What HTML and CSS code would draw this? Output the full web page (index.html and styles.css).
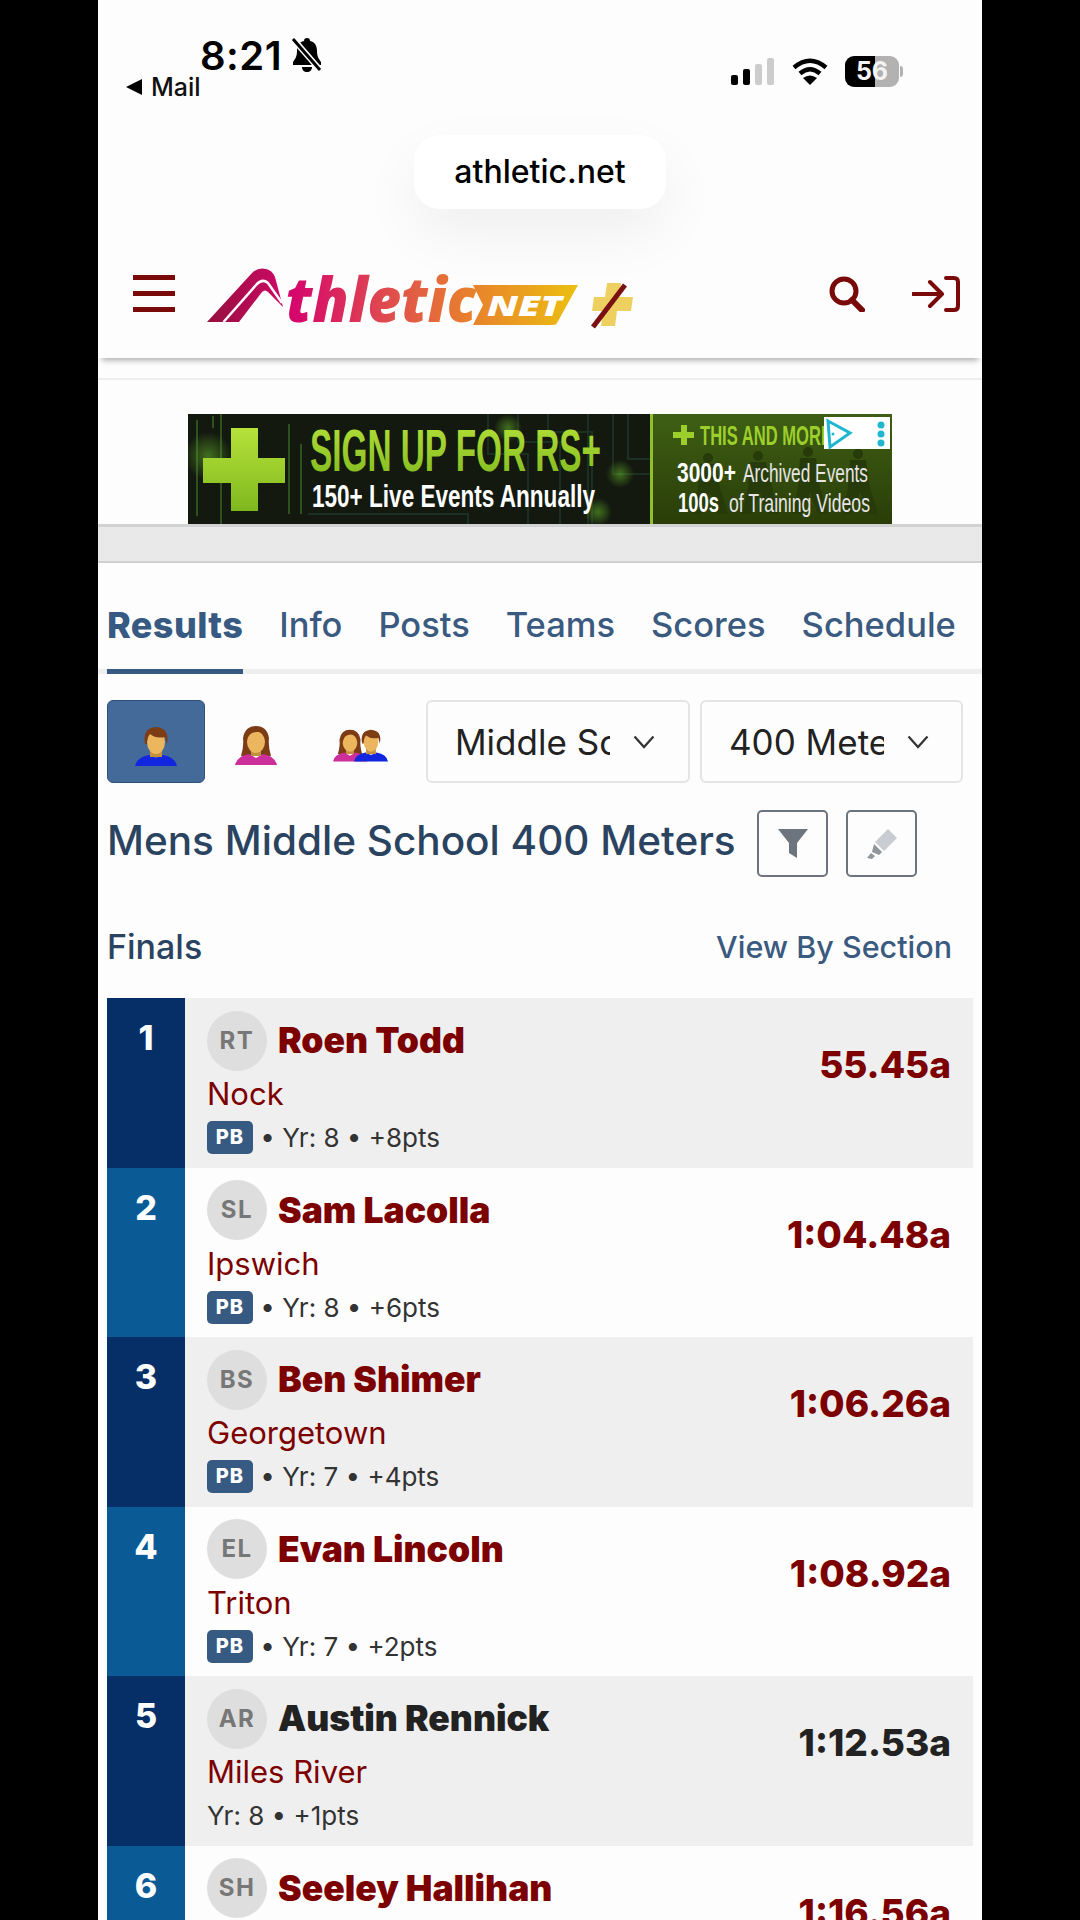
FILE: index.html
```html
<!DOCTYPE html>
<html lang="en">
<head>
  <meta charset="UTF-8">
  <title>Athletic.net Results</title>
  <link rel="stylesheet" href="styles.css">
</head>
<body>
  <svg class="defs" width="0" height="0">
    <defs>
      <linearGradient id="logoGrad" gradientUnits="userSpaceOnUse" x1="0" y1="0" x2="372" y2="0">
        <stop offset="0" stop-color="#94103c"/>
        <stop offset="0.24" stop-color="#d6076c"/>
        <stop offset="0.5" stop-color="#e04f4c"/>
        <stop offset="0.72" stop-color="#e8832c"/>
        <stop offset="1" stop-color="#ecc010"/>
      </linearGradient>
      <linearGradient id="adGreen" x1="0" y1="0" x2="0" y2="1">
        <stop offset="0" stop-color="#b6e23a"/>
        <stop offset="1" stop-color="#7fb81e"/>
      </linearGradient>
      <radialGradient id="adGlow">
        <stop offset="0" stop-color="#5fa82a" stop-opacity="0.6"/>
        <stop offset="1" stop-color="#5fa82a" stop-opacity="0"/>
      </radialGradient>
      <linearGradient id="adRight" x1="0" y1="0" x2="0" y2="1">
        <stop offset="0" stop-color="#3f5f14"/>
        <stop offset="1" stop-color="#2a3d08"/>
      </linearGradient>
      <symbol id="man" viewBox="0 0 42 40">
        <path d="M0 39Q2 30 14 28L21 31 28 28Q40 30 42 39Z" fill="#1226e0"/>
        <rect x="15" y="21" width="12" height="9" fill="#c58f42"/>
        <ellipse cx="21" cy="15" rx="9" ry="12" fill="#ecb65e"/>
        <path d="M10 17Q7 1 21 0 35 1 32 17L30 10Q21 12 15 7 12 10 12 17Z" fill="#7c3c14"/>
      </symbol>
      <symbol id="woman" viewBox="0 0 42 40">
        <path d="M6 30Q9 20 8 12 10 0 21 0 32 0 34 12 33 20 36 30Z" fill="#7c3c14"/>
        <path d="M0 39Q2 30 14 28L21 32 28 28Q40 30 42 39Z" fill="#cc2f9a"/>
        <rect x="16" y="22" width="10" height="8" fill="#c58f42"/>
        <ellipse cx="21" cy="16" rx="9" ry="11" fill="#ecb65e"/>
        <path d="M12 14Q14 5 24 6 29 8 30 14 30 5 21 4 12 5 12 14Z" fill="#7c3c14"/>
      </symbol>
    </defs>
  </svg>

  <div class="screen">
    <div class="status">
      <div class="status-left">
        <div class="time-row">
          <span class="time">8:21</span>
          <svg class="bell" viewBox="0 0 32 36">
            <path d="M16 1c2 0 3 1 3 3 5 1 7 5 7 10 0 6 2 8 4 11v3H2v-3c2-3 4-5 4-11 0-5 2-9 7-10 0-2 1-3 3-3z" fill="#000"/>
            <path d="M11 30h10c0 3-2 5-5 5s-5-2-5-5z" fill="#000"/>
            <path d="M3 3l27 31" stroke="#fff" stroke-width="6"/>
            <path d="M2 2l27 31" stroke="#000" stroke-width="3"/>
          </svg>
        </div>
        <div class="back"><span class="back-arrow"></span>Mail</div>
      </div>
      <div class="status-right">
        <svg class="signal" viewBox="0 0 44 27">
          <rect x="0" y="17" width="7" height="10" rx="2" fill="#000"/>
          <rect x="12" y="11" width="7" height="16" rx="2" fill="#000"/>
          <rect x="24" y="6" width="7" height="21" rx="2" fill="#ccc"/>
          <rect x="36" y="0" width="7" height="27" rx="2" fill="#ccc"/>
        </svg>
        <svg class="wifi" viewBox="0 0 36 27">
          <path d="M2 9.500Q18-4 34 9.500" fill="none" stroke="#000" stroke-width="4.500"/>
          <path d="M8 15.500Q18 7 28 15.500" fill="none" stroke="#000" stroke-width="4.500"/>
          <path d="M18 27l-7-7q7-5 14 0z" fill="#000"/>
        </svg>
        <div class="battery">
          <div class="battery-body">56</div>
          <span class="battery-nub"></span>
        </div>
      </div>
    </div>

    <div class="url-row">
      <div class="url-pill">athletic.net</div>
    </div>

    <header class="site-header">
      <div class="burger"><span></span><span></span><span></span></div>
      <svg class="logo" viewBox="0 0 430 65">
        <path d="M1 57L46 8Q52 2 60 4 66 5 69 12L77 42 62 27Q59 24 56 27L33 57Z" fill="url(#logoGrad)"/>
        <path d="M17.500 57L50 20Q56 13 62 18L76 38" fill="none" stroke="#fdfdfd" stroke-width="2.500"/>
        <text class="logo-word" x="80" y="57" textLength="190" lengthAdjust="spacingAndGlyphs" fill="url(#logoGrad)">thletic</text>
        <path d="M267 20H372L351 58Q350 60 347 60H267L277 40Z" fill="url(#logoGrad)"/>
        <text class="logo-net" x="281" y="51" textLength="75" lengthAdjust="spacingAndGlyphs" fill="#fff">NET</text>
        <path d="M401 18H415L413 32H427L425 46H411L409 61H395L397 46H386L388 32H399Z" fill="#eed060"/>
        <path d="M387 62L419 20" stroke="#7a1010" stroke-width="5"/>
      </svg>
      <div class="header-icons">
        <svg class="search" viewBox="0 0 36 36">
          <circle cx="15" cy="15" r="12" fill="none" stroke="#7a0a0a" stroke-width="5"/>
          <path d="M23 24l10 10" stroke="#7a0a0a" stroke-width="6" stroke-linecap="round"/>
        </svg>
        <svg class="signin" viewBox="0 0 48 36">
          <path d="M1 18H29M18 6l12 12-12 12" fill="none" stroke="#7a0a0a" stroke-width="4" stroke-linecap="round" stroke-linejoin="round"/>
          <path d="M34 2h8q4 0 4 4v24q0 4-4 4h-8" fill="none" stroke="#7a0a0a" stroke-width="4" stroke-linecap="round"/>
        </svg>
      </div>
    </header>

    <div class="ad-wrap">
      <svg class="ad" viewBox="0 0 704 110">
        <rect width="463" height="110" fill="#14190f"/>
        <g fill="none" stroke="#1b2f22" stroke-width="2">
          <path d="M300 0V40H340V110M330 0V28H372V110M360 0V18H404V110"/>
          <path d="M400 0V110M425 0V60H463M440 0V45H463M120 100H280V110"/>
        </g>
        <g fill="#2d5220">
          <rect x="8" y="6" width="2" height="96"/>
          <rect x="24" y="2" width="2" height="12"/>
          <rect x="32" y="0" width="2" height="110"/>
          <rect x="100" y="10" width="2" height="90"/>
          <rect x="112" y="30" width="2" height="70"/>
        </g>
        <circle cx="20" cy="42" r="24" fill="url(#adGlow)"/>
        <circle cx="320" cy="14" r="14" fill="url(#adGlow)"/>
        <circle cx="432" cy="60" r="14" fill="url(#adGlow)"/>
        <circle cx="410" cy="98" r="14" fill="url(#adGlow)"/>
        <path d="M43 14H70V44H97V69H70V97H43V69H15V44H43Z" fill="url(#adGreen)"/>
        <text class="ad-head" x="122" y="57" textLength="291" lengthAdjust="spacingAndGlyphs" fill="url(#adGreen)">SIGN UP FOR RS+</text>
        <text class="ad-sub" x="124" y="93" textLength="283" lengthAdjust="spacingAndGlyphs">150+ Live Events Annually</text>

        <rect x="463" width="241" height="110" fill="url(#adRight)"/>
        <rect x="462" width="3" height="110" fill="#8fc12c"/>
        <g fill="#263a0a">
          <circle cx="520" cy="44" r="5"/><path d="M512 50h16l4 24 8 26h-10l-8-22-8 22h-10l6-26z"/>
          <circle cx="570" cy="42" r="5"/><path d="M562 48h16l6 26 6 26h-10l-8-22-8 22h-10l6-26z"/>
          <circle cx="620" cy="38" r="5"/><path d="M612 44h16l4 30 8 26h-10l-8-22-8 22h-10l6-26z"/>
          <circle cx="670" cy="40" r="5"/><path d="M662 46h16l4 28 8 26h-10l-8-22-8 22h-10l6-26z"/>
        </g>
        <path d="M493 11H499V18H506V24H499V31H493V24H485V18H493Z" fill="#9ccf2c"/>
        <text class="ad-more" x="512" y="31" textLength="132" lengthAdjust="spacingAndGlyphs" fill="#9ccf2c">THIS AND MORE</text>
        <text class="ad-num" x="489" y="68" textLength="59" lengthAdjust="spacingAndGlyphs">3000+</text>
        <text class="ad-small" x="555" y="68" textLength="125" lengthAdjust="spacingAndGlyphs">Archived Events</text>
        <text class="ad-num" x="490" y="98" textLength="41" lengthAdjust="spacingAndGlyphs">100s</text>
        <text class="ad-small" x="541" y="98" textLength="141" lengthAdjust="spacingAndGlyphs">of Training Videos</text>

        <rect x="636" y="3" width="66" height="32" fill="#fff"/>
        <path d="M640 7L662 19 642 33Z" fill="none" stroke="#1fb6d0" stroke-width="3"/>
        <circle cx="645" cy="20" r="1.500" fill="#1fb6d0"/>
        <g fill="#1fb6d0">
          <circle cx="693" cy="11" r="3.500"/><circle cx="693" cy="20" r="3.500"/><circle cx="693" cy="29" r="3.500"/>
        </g>
      </svg>
    </div>
    <div class="ad-band"></div>

    <nav class="tabs">
      <a class="tab tab-active">Results</a>
      <a class="tab">Info</a>
      <a class="tab">Posts</a>
      <a class="tab">Teams</a>
      <a class="tab">Scores</a>
      <a class="tab">Schedule</a>
    </nav>

    <div class="controls">
      <div class="gender gender-active"><svg class="person"><use href="#man"/></svg></div>
      <div class="gender"><svg class="person"><use href="#woman"/></svg></div>
      <div class="gender gender-last"><svg class="person-pair" viewBox="0 0 55 40"><use href="#woman" width="34" height="40"/><use href="#man" x="21" width="34" height="40"/></svg></div>
      <div class="select">
        <span class="select-text">Middle School</span>
        <svg class="chevron" viewBox="0 0 22 14"><path d="M1.500 1.500L11 12 20.500 1.500" fill="none" stroke="#333" stroke-width="2.200"/></svg>
      </div>
      <div class="select">
        <span class="select-text">400 Meters</span>
        <svg class="chevron" viewBox="0 0 22 14"><path d="M1.500 1.500L11 12 20.500 1.500" fill="none" stroke="#333" stroke-width="2.200"/></svg>
      </div>
    </div>

    <div class="title-row">
      <h1 class="title">Mens Middle School 400 Meters</h1>
      <div class="tool-btn">
        <svg class="tool-icon" viewBox="0 0 32 32"><path d="M1 1H31L20 15V30L12 25V15Z" fill="#6c757d"/></svg>
      </div>
      <div class="tool-btn">
        <svg class="tool-icon" viewBox="0 0 32 32"><path d="M22 1L31 10 18 23 9 14Z" fill="#c9cdd1"/><path d="M8 16L16 24 13 27 6 24ZM5 25L9 28 6 31 1 30Z" fill="#8f969c"/></svg>
      </div>
    </div>

    <div class="section-row">
      <span class="section-name">Finals</span>
      <a class="section-link">View By Section</a>
    </div>

    <div class="results">
      <div class="row row-odd">
        <div class="rank">1</div>
        <div class="athlete">
          <div class="athlete-top"><span class="avatar">RT</span><a class="name">Roen Todd</a></div>
          <a class="team">Nock</a>
          <div class="meta"><span class="pb">PB</span> • Yr: 8 • +8pts</div>
        </div>
        <a class="mark">55.45a</a>
      </div>
      <div class="row">
        <div class="rank">2</div>
        <div class="athlete">
          <div class="athlete-top"><span class="avatar">SL</span><a class="name">Sam Lacolla</a></div>
          <a class="team">Ipswich</a>
          <div class="meta"><span class="pb">PB</span> • Yr: 8 • +6pts</div>
        </div>
        <a class="mark">1:04.48a</a>
      </div>
      <div class="row row-odd">
        <div class="rank">3</div>
        <div class="athlete">
          <div class="athlete-top"><span class="avatar">BS</span><a class="name">Ben Shimer</a></div>
          <a class="team">Georgetown</a>
          <div class="meta"><span class="pb">PB</span> • Yr: 7 • +4pts</div>
        </div>
        <a class="mark">1:06.26a</a>
      </div>
      <div class="row">
        <div class="rank">4</div>
        <div class="athlete">
          <div class="athlete-top"><span class="avatar">EL</span><a class="name">Evan Lincoln</a></div>
          <a class="team">Triton</a>
          <div class="meta"><span class="pb">PB</span> • Yr: 7 • +2pts</div>
        </div>
        <a class="mark">1:08.92a</a>
      </div>
      <div class="row row-odd">
        <div class="rank">5</div>
        <div class="athlete">
          <div class="athlete-top"><span class="avatar">AR</span><a class="name name-plain">Austin Rennick</a></div>
          <a class="team">Miles River</a>
          <div class="meta meta-plain">Yr: 8 • +1pts</div>
        </div>
        <a class="mark mark-plain">1:12.53a</a>
      </div>
      <div class="row">
        <div class="rank">6</div>
        <div class="athlete">
          <div class="athlete-top"><span class="avatar">SH</span><a class="name">Seeley Hallihan</a></div>
        </div>
        <a class="mark">1:16.56a</a>
      </div>
    </div>
  </div>
</body>
</html>
```

FILE: styles.css
```css
* {
  box-sizing: border-box;
}
body {
  margin: 0;
  background: #000;
  font-family: Inter, "Liberation Sans", sans-serif;
}
.defs {
  display: block;
  height: 0;
}
.screen {
  width: 884px;
  height: 1920px;
  margin: 0 auto;
  overflow: hidden;
  background: #fdfdfd;
  color: #222;
}

/* phone status bar */
.status {
  height: 115px;
  padding: 36px 79px 0 28px;
  display: flex;
  justify-content: space-between;
}
.time-row {
  display: flex;
  align-items: center;
  gap: 9px;
  margin-left: 74px;
  height: 38px;
}
.time {
  font-size: 40px;
  font-weight: 600;
  letter-spacing: 0.5px;
  color: #000;
}
.bell {
  width: 32px;
  height: 36px;
}
.back {
  display: flex;
  align-items: center;
  font-size: 25px;
  font-weight: 500;
  color: #111;
  height: 26px;
}
.back-arrow {
  width: 0;
  height: 0;
  border-style: solid;
  border-width: 8px 16px 8px 0;
  border-color: transparent #000 transparent transparent;
  margin-right: 9px;
}
.status-right {
  display: flex;
  align-items: center;
  gap: 17px;
  height: 31px;
  margin-top: 20px;
}
.signal {
  width: 44px;
  height: 27px;
}
.wifi {
  width: 36px;
  height: 27px;
}
.battery {
  display: flex;
  align-items: center;
  gap: 1px;
}
.battery-body {
  width: 54px;
  height: 31px;
  border-radius: 9px;
  background: linear-gradient(90deg, #000 55%, #b2b2b2 55%);
  color: #f4f4f4;
  font-size: 25px;
  font-weight: 700;
  line-height: 31px;
  text-align: center;
}
.battery-nub {
  width: 3px;
  height: 11px;
  background: #b2b2b2;
  border-radius: 0 3px 3px 0;
}

/* safari url pill */
.url-row {
  display: flex;
  justify-content: center;
  padding-top: 20px;
  height: 94px;
}
.url-pill {
  width: 252px;
  height: 74px;
  border-radius: 26px;
  background: #fff;
  box-shadow: 0 24px 60px rgba(0, 0, 0, 0.06);
  font-size: 32px;
  font-weight: 500;
  line-height: 74px;
  text-align: center;
  color: #000;
}

.site-header {
  height: 149px;
  padding: 56px 22px 0 35px;
  display: flex;
  align-items: flex-start;
  box-shadow: 0 6px 6px -4px rgba(0, 0, 0, 0.35);
}
.burger {
  width: 42px;
  height: 37px;
  margin-top: 10px;
  display: flex;
  flex-direction: column;
  justify-content: space-between;
}
.burger span {
  height: 5px;
  background: #7a0a0a;
}
.logo {
  width: 430px;
  height: 65px;
  margin-left: 31px;
}
.logo-word {
  font-family: "Open Sans", sans-serif;
  font-size: 62px;
  font-weight: 800;
  font-style: italic;
}
.logo-net {
  font-family: "Open Sans", sans-serif;
  font-size: 29px;
  font-weight: 800;
  font-style: italic;
}
.header-icons {
  margin-left: auto;
  display: flex;
  gap: 47px;
  margin-top: 11px;
}
.search {
  width: 36px;
  height: 36px;
}
.signin {
  width: 48px;
  height: 36px;
}

/* ad */
.ad-wrap {
  margin-top: 20px;
  padding-top: 34px;
  border-top: 2px solid #eee;
  display: flex;
  justify-content: center;
}
.ad {
  display: block;
  width: 704px;
  height: 110px;
}
.ad text {
  font-family: "Liberation Sans Narrow", "Liberation Sans", sans-serif;
}
.ad-head {
  font-size: 60px;
  font-weight: 700;
}
.ad-sub {
  font-size: 32px;
  font-weight: 700;
  fill: #fff;
}
.ad-more {
  font-size: 28px;
  font-weight: 700;
}
.ad-num {
  font-size: 28px;
  font-weight: 700;
  fill: #fff;
}
.ad-small {
  font-size: 26px;
  fill: #e6e6e6;
}
.ad-band {
  height: 39px;
  background: #e9e9e9;
  border-top: 3px solid #d2d2d2;
  border-bottom: 2px solid #d0d0d0;
}

/* tabs */
.tabs {
  height: 111px;
  padding: 40px 0 0 9px;
  display: flex;
  gap: 36px;
  border-bottom: 5px solid #eee;
}
.tab {
  height: 71px;
  font-size: 34.5px;
  font-weight: 500;
  line-height: 44px;
  color: #3a5a80;
}
.tab-active {
  font-size: 36px;
  font-weight: 800;
  letter-spacing: 0.4px;
  color: #375a82;
  border-bottom: 5px solid #375a82;
}

.controls {
  margin-top: 26px;
  padding: 0 19px 0 9px;
  height: 83px;
  display: flex;
  align-items: stretch;
}
.gender {
  width: 98px;
  border-radius: 6px;
  display: flex;
  align-items: flex-start;
  justify-content: center;
  padding-top: 26px;
  margin-right: 2px;
}
.gender-active {
  background: #436a99;
  border: 1px solid #2f5078;
}
.gender-last {
  margin-right: 11px;
  padding-left: 8px;
}
.person {
  width: 42px;
  height: 40px;
}
.person-pair {
  width: 55px;
  height: 40px;
}
.select {
  width: 264px;
  margin-left: 10px;
  border: 2px solid #e4e4e4;
  border-radius: 6px;
  padding-left: 27px;
  display: flex;
  align-items: center;
}
.select + .select {
  width: 263px;
}
.select-text {
  width: 155px;
  overflow: hidden;
  white-space: nowrap;
  font-size: 35px;
  color: #222;
}
.chevron {
  width: 22px;
  height: 14px;
  margin-left: 23px;
}

.title-row {
  margin-top: 27px;
  padding-left: 9px;
  height: 67px;
  display: flex;
  align-items: flex-start;
  gap: 18px;
}
.title {
  margin: 0;
  width: 632px;
  font-size: 40.5px;
  font-weight: 500;
  line-height: 62px;
  white-space: nowrap;
  color: #2a4360;
}
.tool-btn {
  width: 71px;
  height: 67px;
  border: 2px solid #6c757d;
  border-radius: 5px;
  display: flex;
  align-items: center;
  justify-content: center;
}
.tool-icon {
  width: 32px;
  height: 32px;
}

.section-row {
  margin-top: 47px;
  padding: 0 30px 0 9px;
  height: 44px;
  display: flex;
  justify-content: space-between;
  align-items: center;
}
.section-name {
  font-size: 34px;
  font-weight: 500;
  color: #2a4360;
}
.section-link {
  font-size: 30.5px;
  font-weight: 500;
  color: #3a5a80;
}

/* results list */
.results {
  margin: 30px 9px 0;
}
.row {
  height: 169.6px;
  display: flex;
}
.row-odd {
  background: #efefef;
}
.rank {
  width: 78px;
  flex-shrink: 0;
  background: #0a5a96;
  color: #fff;
  font-size: 34px;
  font-weight: 800;
  padding-top: 19px;
  text-align: center;
}
.row-odd .rank {
  background: #052f66;
}
.athlete {
  flex: 1;
  padding: 12px 0 0 22px;
}
.athlete-top {
  display: flex;
  align-items: center;
  gap: 11px;
  height: 61px;
}
.avatar {
  width: 60px;
  height: 60px;
  border-radius: 50%;
  background: #dedede;
  color: #777;
  font-size: 24px;
  font-weight: 700;
  letter-spacing: 1.5px;
  line-height: 60px;
  text-align: center;
}
.name {
  font-size: 35.5px;
  font-weight: 900;
  color: #7d0000;
}
.name-plain {
  color: #222;
}
.team {
  display: block;
  margin-top: 3px;
  font-size: 31px;
  line-height: 40px;
  color: #7d0000;
}
.meta {
  margin-top: 7px;
  display: flex;
  align-items: center;
  height: 33px;
  font-size: 26px;
  color: #333;
  white-space: pre;
}
.pb {
  width: 46px;
  height: 33px;
  border-radius: 5px;
  background: #375a82;
  color: #fff;
  font-size: 20px;
  font-weight: 800;
  letter-spacing: 1px;
  line-height: 33px;
  text-align: center;
}
.mark {
  align-self: flex-start;
  margin-top: 47px;
  margin-right: 22px;
  font-size: 37px;
  font-weight: 800;
  line-height: 40px;
  color: #7d0000;
}
.mark-plain {
  color: #222;
}
```
